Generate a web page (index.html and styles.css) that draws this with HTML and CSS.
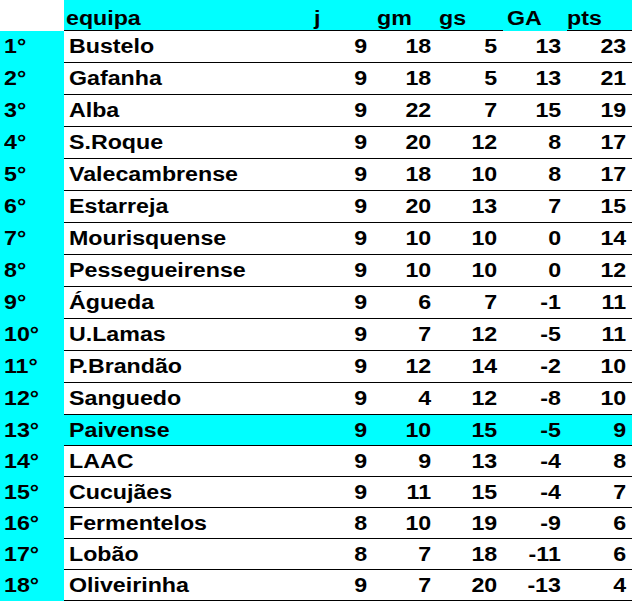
FILE: index.html
```html
<!DOCTYPE html>
<html lang="pt">
<head>
<meta charset="utf-8">
<title>Classificação</title>
<link rel="stylesheet" href="styles.css">
</head>
<body>
<table class="standings">
  <colgroup>
    <col class="c-pos"><col class="c-team"><col class="c-j"><col class="c-gm"><col class="c-gs"><col class="c-ga"><col class="c-pts">
  </colgroup>
  <thead>
    <tr class="head">
      <th class="blank"></th>
      <th class="h-team"><span class="tx">equipa</span></th>
      <th class="h-j"><span class="tx">j</span></th>
      <th class="h-gm"><span class="tx">gm</span></th>
      <th class="h-gs"><span class="tx">gs</span></th>
      <th class="h-ga"><span class="tx">GA</span></th>
      <th class="h-pts"><span class="tx">pts</span></th>
    </tr>
  </thead>
  <tbody>
    <tr><td class="pos"><span class="tx">1°</span></td><td class="team"><span class="tx">Bustelo</span></td><td><span class="tx">9</span></td><td><span class="tx">18</span></td><td><span class="tx">5</span></td><td><span class="tx">13</span></td><td><span class="tx">23</span></td></tr>
    <tr><td class="pos"><span class="tx">2°</span></td><td class="team"><span class="tx">Gafanha</span></td><td><span class="tx">9</span></td><td><span class="tx">18</span></td><td><span class="tx">5</span></td><td><span class="tx">13</span></td><td><span class="tx">21</span></td></tr>
    <tr><td class="pos"><span class="tx">3°</span></td><td class="team"><span class="tx">Alba</span></td><td><span class="tx">9</span></td><td><span class="tx">22</span></td><td><span class="tx">7</span></td><td><span class="tx">15</span></td><td><span class="tx">19</span></td></tr>
    <tr><td class="pos"><span class="tx">4°</span></td><td class="team"><span class="tx">S.Roque</span></td><td><span class="tx">9</span></td><td><span class="tx">20</span></td><td><span class="tx">12</span></td><td><span class="tx">8</span></td><td><span class="tx">17</span></td></tr>
    <tr><td class="pos"><span class="tx">5°</span></td><td class="team"><span class="tx">Valecambrense</span></td><td><span class="tx">9</span></td><td><span class="tx">18</span></td><td><span class="tx">10</span></td><td><span class="tx">8</span></td><td><span class="tx">17</span></td></tr>
    <tr><td class="pos"><span class="tx">6°</span></td><td class="team"><span class="tx">Estarreja</span></td><td><span class="tx">9</span></td><td><span class="tx">20</span></td><td><span class="tx">13</span></td><td><span class="tx">7</span></td><td><span class="tx">15</span></td></tr>
    <tr><td class="pos"><span class="tx">7°</span></td><td class="team"><span class="tx">Mourisquense</span></td><td><span class="tx">9</span></td><td><span class="tx">10</span></td><td><span class="tx">10</span></td><td><span class="tx">0</span></td><td><span class="tx">14</span></td></tr>
    <tr><td class="pos"><span class="tx">8°</span></td><td class="team"><span class="tx">Pessegueirense</span></td><td><span class="tx">9</span></td><td><span class="tx">10</span></td><td><span class="tx">10</span></td><td><span class="tx">0</span></td><td><span class="tx">12</span></td></tr>
    <tr><td class="pos"><span class="tx">9°</span></td><td class="team"><span class="tx">Águeda</span></td><td><span class="tx">9</span></td><td><span class="tx">6</span></td><td><span class="tx">7</span></td><td><span class="tx">-1</span></td><td><span class="tx">11</span></td></tr>
    <tr><td class="pos"><span class="tx">10°</span></td><td class="team"><span class="tx">U.Lamas</span></td><td><span class="tx">9</span></td><td><span class="tx">7</span></td><td><span class="tx">12</span></td><td><span class="tx">-5</span></td><td><span class="tx">11</span></td></tr>
    <tr><td class="pos"><span class="tx">11°</span></td><td class="team"><span class="tx">P.Brandão</span></td><td><span class="tx">9</span></td><td><span class="tx">12</span></td><td><span class="tx">14</span></td><td><span class="tx">-2</span></td><td><span class="tx">10</span></td></tr>
    <tr><td class="pos"><span class="tx">12°</span></td><td class="team"><span class="tx">Sanguedo</span></td><td><span class="tx">9</span></td><td><span class="tx">4</span></td><td><span class="tx">12</span></td><td><span class="tx">-8</span></td><td><span class="tx">10</span></td></tr>
    <tr class="short mine"><td class="pos"><span class="tx">13°</span></td><td class="team"><span class="tx">Paivense</span></td><td><span class="tx">9</span></td><td><span class="tx">10</span></td><td><span class="tx">15</span></td><td><span class="tx">-5</span></td><td><span class="tx">9</span></td></tr>
    <tr class="short"><td class="pos"><span class="tx">14°</span></td><td class="team"><span class="tx">LAAC</span></td><td><span class="tx">9</span></td><td><span class="tx">9</span></td><td><span class="tx">13</span></td><td><span class="tx">-4</span></td><td><span class="tx">8</span></td></tr>
    <tr class="short"><td class="pos"><span class="tx">15°</span></td><td class="team"><span class="tx">Cucujães</span></td><td><span class="tx">9</span></td><td><span class="tx">11</span></td><td><span class="tx">15</span></td><td><span class="tx">-4</span></td><td><span class="tx">7</span></td></tr>
    <tr class="short"><td class="pos"><span class="tx">16°</span></td><td class="team"><span class="tx">Fermentelos</span></td><td><span class="tx">8</span></td><td><span class="tx">10</span></td><td><span class="tx">19</span></td><td><span class="tx">-9</span></td><td><span class="tx">6</span></td></tr>
    <tr class="short"><td class="pos"><span class="tx">17°</span></td><td class="team"><span class="tx">Lobão</span></td><td><span class="tx">8</span></td><td><span class="tx">7</span></td><td><span class="tx">18</span></td><td><span class="tx">-11</span></td><td><span class="tx">6</span></td></tr>
    <tr class="short"><td class="pos"><span class="tx">18°</span></td><td class="team"><span class="tx">Oliveirinha</span></td><td><span class="tx">9</span></td><td><span class="tx">7</span></td><td><span class="tx">20</span></td><td><span class="tx">-13</span></td><td><span class="tx">4</span></td></tr>
  </tbody>
</table>
</body>
</html>
```
FILE: styles.css
```css
html, body {
  margin: 0;
  padding: 0;
  background: #ffffff;
}

.standings {
  border-collapse: separate;
  border-spacing: 0;
  table-layout: fixed;
  width: 632px;
  font-family: "Liberation Sans", Arial, sans-serif;
  font-weight: bold;
  font-size: 20px;
  color: #000000;
}

.c-pos { width: 64px; }
.c-team { width: 246px; }
.c-j { width: 63px; }
.c-gm { width: 64px; }
.c-gs { width: 66px; }
.c-ga { width: 64px; }
.c-pts { width: 65px; }

.standings th,
.standings td {
  box-sizing: border-box;
  padding: 0 6px 0 0;
  white-space: nowrap;
  overflow: visible;
}

/* the source face is drawn a little wide */
.tx {
  display: inline-block;
  transform: scaleX(1.16);
  transform-origin: 100% 50%;
}

/* header */
.standings .head th {
  height: 31px;
  background: #00ffff;
  border-bottom: 1px solid #000000;
  text-align: left;
  vertical-align: bottom;
  font-weight: bold;
  padding-right: 0;
}
.standings .head th .tx,
.standings td.pos .tx,
.standings td.team .tx {
  transform-origin: 0 50%;
}
.standings .head th.blank {
  background: #ffffff;
  border-bottom-color: #ffffff;
}
.standings .head th.h-ga {
  border-bottom-color: #00ffff;
}
.standings .head .h-team { padding-left: 2px; }
.standings .head .h-j { padding-left: 3.5px; }
.standings .head .h-gm { padding-left: 4px; }
.standings .head .h-gs { padding-left: 2px; }
.standings .head .h-ga { padding-left: 4px; }
.standings .head .h-pts { padding-left: 0; }

/* body */
.standings tbody td {
  height: 32px;
  border-bottom: 1px solid #000000;
  text-align: right;
  vertical-align: middle;
}
.standings tbody tr.short td {
  height: 31px;
}
.standings tbody td.pos {
  background: #00ffff;
  border-bottom-color: #00ffff;
  text-align: left;
  padding-left: 4px;
}
.standings tbody td.team {
  text-align: left;
  padding-left: 5px;
}
.standings tbody tr.mine td {
  background: #00ffff;
}
```
